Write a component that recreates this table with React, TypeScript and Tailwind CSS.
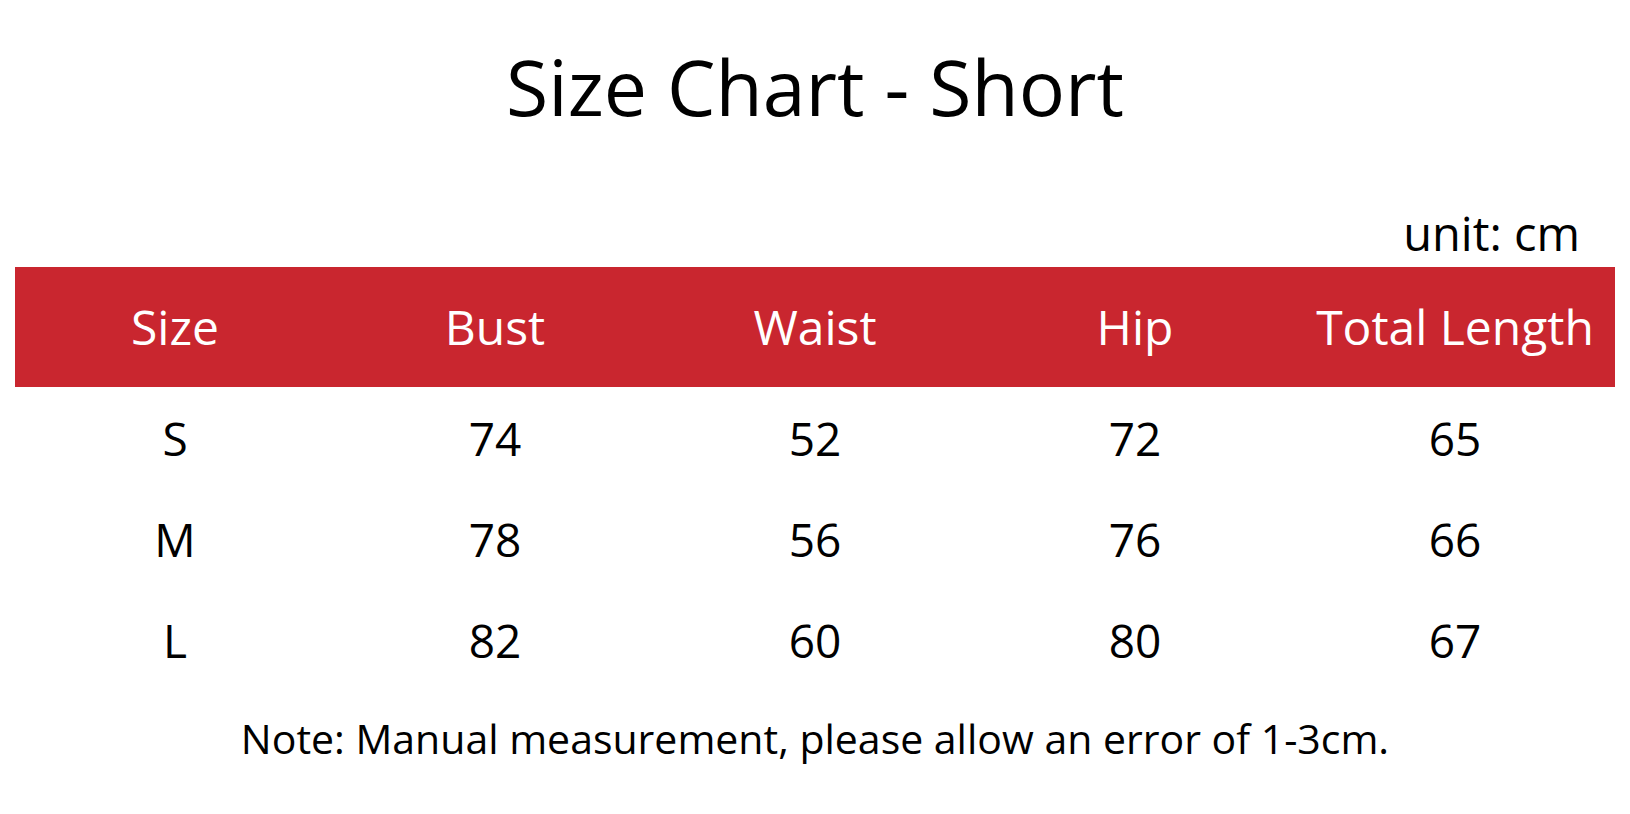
import React from 'react';

const App: React.FC = () => {
  const headers = ['Size', 'Bust', 'Waist', 'Hip', 'Total Length'];
  const rows = [
    ['S', '74', '52', '72', '65'],
    ['M', '78', '56', '76', '66'],
    ['L', '82', '60', '80', '67'],
  ];

  return (
    <div className="w-[1630px] h-[814px] bg-white text-black font-['Open_Sans',sans-serif] overflow-hidden">
      <h1 className="pt-[48px] text-center text-[77px] leading-none font-normal">Size Chart - Short</h1>

      <div className="mt-[85px] pr-[50px] text-right text-[47px] leading-none">unit: cm</div>

      <div className="mt-[10px] mx-[15px] w-[1600px]">
        <div className="grid grid-cols-5 h-[120px] items-center bg-[#c9262f] text-white">
          {headers.map((h) => (
            <div key={h} className="text-center text-[48px] leading-none">{h}</div>
          ))}
        </div>

        {rows.map((row) => (
          <div key={row[0]} className="grid grid-cols-5 h-[101px] items-center">
            {row.map((cell, i) => (
              <div key={i} className="text-center text-[46px] leading-none">{cell}</div>
            ))}
          </div>
        ))}
      </div>

      <p className="mt-[28px] text-center text-[41px] leading-none">
        Note: Manual measurement, please allow an error of 1-3cm.
      </p>
    </div>
  );
};

export default App;
